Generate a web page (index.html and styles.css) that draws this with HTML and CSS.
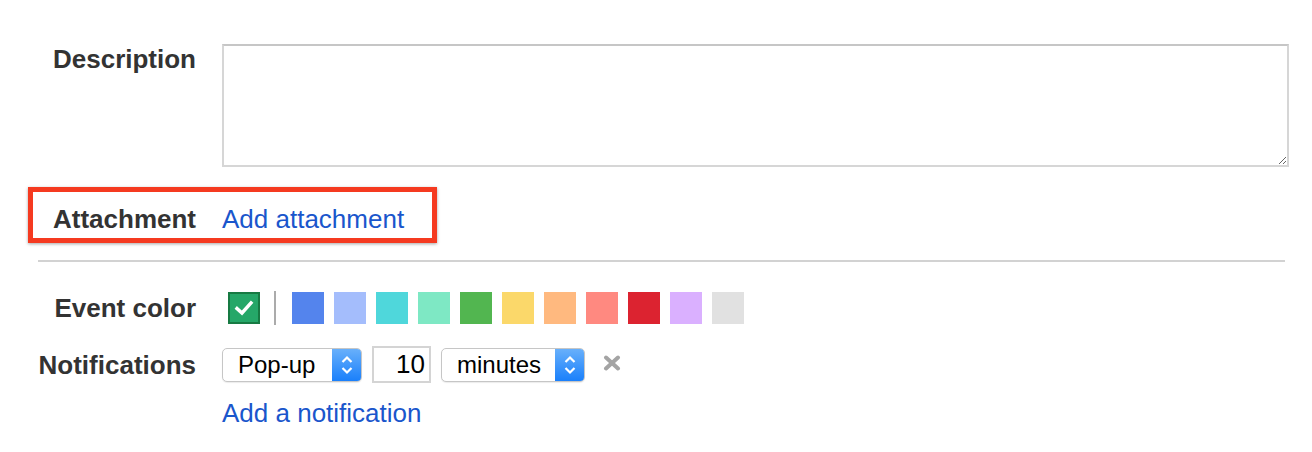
FILE: index.html
```html
<!DOCTYPE html>
<html>
<head>
<meta charset="utf-8">
<link rel="stylesheet" href="styles.css">
</head>
<body>
<div class="form">
  <div class="field field-desc">
    <div class="label">Description</div>
    <textarea class="desc"></textarea>
  </div>
  <div class="field field-attach">
    <div class="label">Attachment</div>
    <a class="link" href="#">Add attachment</a>
    <div class="highlight"></div>
  </div>
  <div class="rule"></div>
  <div class="field field-color">
    <div class="label">Event color</div>
    <div class="swatches">
      <div class="swatch checked">
        <svg width="22" height="22" viewBox="0 0 22 22"><polyline points="4,11.5 9,16 18,6" fill="none" stroke="#fff" stroke-width="3.4" stroke-linecap="square"/></svg>
      </div>
      <div class="sep"></div>
      <div class="swatch" style="background:#5484ed"></div>
      <div class="swatch" style="background:#a4bdfc"></div>
      <div class="swatch" style="background:#4fd7db"></div>
      <div class="swatch" style="background:#7ee8c4"></div>
      <div class="swatch" style="background:#52b650"></div>
      <div class="swatch" style="background:#fbd86a"></div>
      <div class="swatch" style="background:#ffb97f"></div>
      <div class="swatch" style="background:#ff8980"></div>
      <div class="swatch" style="background:#dc2330"></div>
      <div class="swatch" style="background:#dab0ff"></div>
      <div class="swatch" style="background:#e1e1e1"></div>
    </div>
  </div>
  <div class="field field-notif">
    <div class="label">Notifications</div>
    <div class="controls">
      <div class="select select-type">
        <span class="select-text">Pop-up</span>
        <span class="select-btn">
          <svg width="14" height="24" viewBox="0 0 14 24"><polyline points="2.5,9 7,4.5 11.5,9" fill="none" stroke="#fff" stroke-width="2.2"/><polyline points="2.5,15 7,19.5 11.5,15" fill="none" stroke="#fff" stroke-width="2.2"/></svg>
        </span>
      </div>
      <div class="num">10</div>
      <div class="select select-unit">
        <span class="select-text">minutes</span>
        <span class="select-btn">
          <svg width="14" height="24" viewBox="0 0 14 24"><polyline points="2.5,9 7,4.5 11.5,9" fill="none" stroke="#fff" stroke-width="2.2"/><polyline points="2.5,15 7,19.5 11.5,15" fill="none" stroke="#fff" stroke-width="2.2"/></svg>
        </span>
      </div>
      <svg class="remove" width="18" height="16" viewBox="0 0 18 16"><line x1="3" y1="2.5" x2="15" y2="13.5" stroke="#a4a4a4" stroke-width="4" stroke-linecap="round"/><line x1="15" y1="2.5" x2="3" y2="13.5" stroke="#a4a4a4" stroke-width="4" stroke-linecap="round"/></svg>
    </div>
  </div>
  <div class="field field-add">
    <div class="label"></div>
    <a class="link" href="#">Add a notification</a>
  </div>
</div>
</body>
</html>
```

FILE: styles.css
```css
html, body {
  margin: 0;
  padding: 0;
  background: #fff;
}
body {
  font-family: "Liberation Sans", Arial, sans-serif;
  color: #333;
}
.form {
  padding-top: 44px;
}
.field {
  display: flex;
  align-items: flex-start;
}
.label {
  width: 196px;
  flex: none;
  margin-right: 26px;
  text-align: right;
  font-weight: bold;
  font-size: 26px;
  line-height: 30px;
  color: #333;
}
.desc {
  display: block;
  box-sizing: border-box;
  width: 1067px;
  height: 123px;
  margin: 0;
  border: 2px solid #d6d6d6;
  border-top-color: #c6c6c6;
  border-radius: 0;
  outline: none;
  resize: both;
  font-family: inherit;
  font-size: 16px;
}
.link {
  color: #1a56cc;
  text-decoration: none;
  font-size: 26px;
  line-height: 30px;
}
.field-attach {
  margin-top: 37px;
  position: relative;
}
.highlight {
  position: absolute;
  left: 28px;
  top: -17px;
  width: 409px;
  height: 56px;
  box-sizing: border-box;
  border: 5px solid #f53a20;
  box-shadow: 0 1px 3px rgba(0, 0, 0, 0.35);
  pointer-events: none;
}
.rule {
  margin: 26px 27px 0 38px;
  border-top: 2px solid #d2d2d2;
}
.field-color {
  margin-top: 29px;
  align-items: center;
}
.swatches {
  display: flex;
  align-items: center;
  gap: 10px;
  margin-left: 6px;
}
.swatch {
  width: 32px;
  height: 32px;
  box-sizing: border-box;
}
.swatch.checked {
  background: #25a768;
  border: 2px solid #177a43;
  display: flex;
  align-items: center;
  justify-content: center;
  margin-right: 4px;
}
.sep {
  width: 2px;
  height: 34px;
  background: #ababab;
  margin-right: 6px;
  align-self: flex-start;
}
.field-notif {
  margin-top: 21px;
  align-items: center;
}
.controls {
  display: flex;
  align-items: center;
  gap: 10px;
}
.select {
  display: flex;
  box-sizing: border-box;
  height: 34px;
  border: 1px solid #c6c6c6;
  border-radius: 5px;
  background: #fff;
  box-shadow: 0 1px 1px rgba(0, 0, 0, 0.08);
  overflow: hidden;
}
.select-type {
  width: 140px;
}
.select-unit {
  width: 144px;
}
.select-text {
  flex: 1;
  padding-left: 15px;
  font-size: 24px;
  line-height: 32px;
  color: #000;
}
.select-btn {
  width: 29px;
  display: flex;
  align-items: center;
  justify-content: center;
  background: linear-gradient(#68b0fb, #1a80fb);
}
.num {
  box-sizing: border-box;
  width: 59px;
  height: 37px;
  border: 2px solid #d4d4d4;
  text-align: right;
  padding-right: 4px;
  font-size: 26px;
  line-height: 33px;
  color: #000;
}
.remove {
  margin-left: 8px;
  margin-top: -4px;
}
.field-add {
  margin-top: 15px;
}
```
